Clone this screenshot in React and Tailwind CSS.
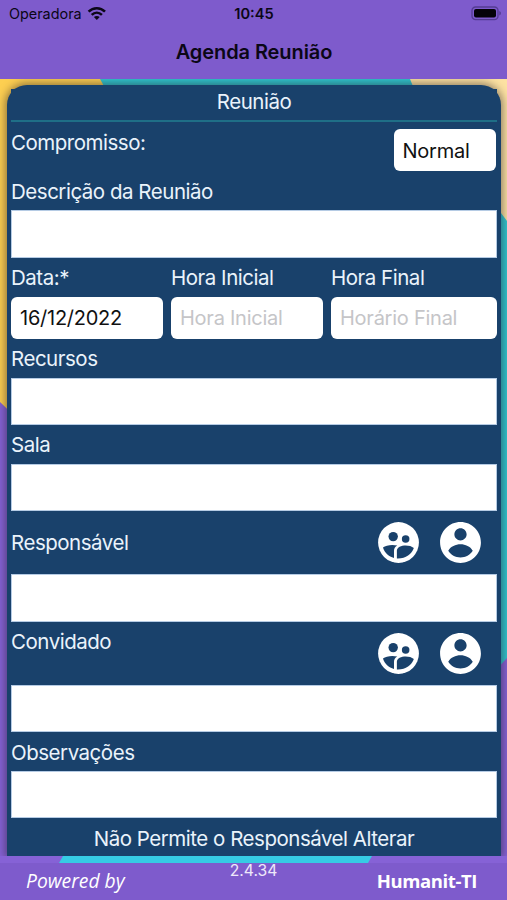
import React from "react";

const label = "text-[20.5px] leading-[24px] tracking-[-0.48px] text-[#eaf3fb] whitespace-nowrap";
const input = "flex items-center rounded-[6px] bg-white pl-[9px] pt-px text-[20px] tracking-[-0.25px]";

function WifiIcon() {
  return (
    <svg width="20" height="15" viewBox="0 0 20 15" fill="none" stroke="#0b0716" strokeWidth="2.5">
      <path d="M1.6 5.7C6.2 1 13.4 1 18 5.7" />
      <path d="M4.7 8.9C7.7 5.9 11.9 5.9 14.9 8.9" />
      <path d="M9.8 14L6.9 11.1C8.5 9.6 11.1 9.6 12.7 11.1Z" fill="#0b0716" stroke="none" />
    </svg>
  );
}

function BatteryIcon() {
  return (
    <svg width="31" height="15" viewBox="0 0 31 15">
      <rect x="1" y="1" width="26" height="12.6" rx="3.6" fill="none" stroke="#543c92" strokeWidth="1.3" />
      <rect x="3" y="3" width="22" height="8.6" rx="2" fill="#040208" />
      <path d="M28.3 5v4.6c1.2-.5 1.6-1.3 1.6-2.3s-.4-1.8-1.6-2.3z" fill="#543c92" />
    </svg>
  );
}

function PeopleCircle() {
  return (
    <svg width="49" height="49" viewBox="0 0 24 24">
      <circle cx="12" cy="12" r="10" fill="#fff" />
      <g fill="#19416b">
        <circle cx="9.4" cy="9.1" r="2.3" />
        <circle cx="15.5" cy="10.3" r="1.85" />
        <path d="M4.4 14.5C5.8 13.4 8.6 12.9 11.4 13.5C10.3 14.2 9.8 15 9.8 16V19.6C7.2 19 5.2 17.1 4.4 14.5Z" />
        <path d="M11.2 19.8V16.1C11.2 14.3 13.4 13.5 15.5 13.5C17.1 13.5 18.5 13.9 19.5 14.7C18.4 17.8 15.4 20 11.2 19.8Z" />
      </g>
    </svg>
  );
}

function PersonCircle() {
  return (
    <svg width="49" height="49" viewBox="0 0 24 24" fill="#fff">
      <path d="M12 2C6.48 2 2 6.48 2 12s4.48 10 10 10 10-4.48 10-10S17.52 2 12 2zm0 3c1.66 0 3 1.34 3 3s-1.34 3-3 3-3-1.34-3-3 1.34-3 3-3zM12 19.3c-2.5 0-4.71-1.28-6-3.3 1.2-2 3.6-3.1 6-3.1s4.8 1.1 6 3.1c-1.29 2.02-3.5 3.3-6 3.3z" />
    </svg>
  );
}

function PeopleButtons() {
  return (
    <div className="mr-3 flex gap-[13.5px]">
      <PeopleCircle />
      <PersonCircle />
    </div>
  );
}

function Field() {
  return <div className="h-[47.5px] shrink-0 border border-[#b5cbe4] bg-white" />;
}

function Backdrop() {
  return (
    <svg className="absolute inset-0" width="507" height="900" viewBox="0 0 507 900">
      <rect width="507" height="900" fill="#2fc6d0" />
      <path d="M0 79H100L110 97V500H0Z" fill="#fdcf51" />
      <path d="M410 79H507V221L422 108Z" fill="#fde2a2" />
      <path d="M0 402L60 460V856H63L59 863V900H0Z" fill="#8662d6" />
      <path d="M507 658L440 730V800L372 856L368 863V900H507Z" fill="#8662d6" />
    </svg>
  );
}

export default function App() {
  return (
    <div className="relative h-[900px] w-[507px] overflow-hidden font-['Inter','Liberation_Sans',sans-serif]">
      <Backdrop />
      <div className="relative flex h-full flex-col">
        <header className="relative z-10 h-[79px] shrink-0 bg-[#7e5bcc] text-[#0b0716]">
          <div className="grid h-[27px] grid-cols-3 items-center pl-[9px] pr-[5px]">
            <div className="flex items-center gap-[5px] text-[14.4px]">
              <span className="pt-px">Operadora</span>
              <WifiIcon />
            </div>
            <span className="-ml-[3px] pt-[2px] text-center text-[14.6px] font-semibold">10:45</span>
            <div className="flex justify-end"><BatteryIcon /></div>
          </div>
          <h1 className="mt-[12px] pl-px text-center text-[20px] font-semibold leading-[26px] tracking-[-0.08px]">Agenda Reunião</h1>
        </header>

        <div className="h-[784px] shrink-0 overflow-hidden pt-[6px]">
          <main className="ml-[7px] h-[771px] w-[494px] rounded-t-[20px] bg-[#19416b] px-1 pt-1 shadow-[0_0_9px_2px_rgba(40,30,40,0.5)]">
            <div className="flex h-[767px] flex-col bg-[#19416b]">
              <div className={`h-[33px] shrink-0 border-b-2 border-[#1f6f87] pt-px text-center ${label}`}>Reunião</div>
              <div className="flex h-[57px] shrink-0 justify-between pr-px pt-[7px]">
                <span className={`pt-[2px] ${label}`}>Compromisso:</span>
                <div className={`h-[42px] w-[102.5px] text-[#111] ${input}`}>Normal</div>
              </div>
              <div className={`h-[31px] shrink-0 pt-px ${label}`}>Descrição da Reunião</div>
              <Field />
              <div className="grid h-[120px] shrink-0 grid-cols-[152px_152px_166px] grid-rows-[39px_42px] gap-x-2">
                <span className={`pt-2 ${label}`}>Data:*</span>
                <span className={`pt-2 ${label}`}>Hora Inicial</span>
                <span className={`pt-2 ${label}`}>Hora Final</span>
                <div className={`text-[#111] ${input}`}>16/12/2022</div>
                <div className={`text-[#c5c5c8] ${input}`}>Hora Inicial</div>
                <div className={`text-[#c5c5c8] ${input}`}>Horário Final</div>
                <span className={`pt-2 ${label}`}>Recursos</span>
              </div>
              <Field />
              <div className={`h-[38.5px] shrink-0 pt-2 ${label}`}>Sala</div>
              <Field />
              <div className="flex h-[63px] shrink-0 items-center justify-between">
                <span className={label}>Responsável</span>
                <PeopleButtons />
              </div>
              <Field />
              <div className="flex h-[63px] shrink-0 justify-between pt-[7px]">
                <span className={`pt-px ${label}`}>Convidado</span>
                <PeopleButtons />
              </div>
              <Field />
              <div className={`h-[38.5px] shrink-0 pt-[9px] ${label}`}>Observações</div>
              <Field />
              <div className={`pt-[9px] text-center ${label}`}>Não Permite o Responsável Alterar</div>
            </div>
          </main>
          <div className="relative h-[7px]">
            <svg width="507" height="7" viewBox="0 0 507 7">
              <rect width="507" height="7" fill="#8662d6" />
              <path d="M63 0H372L368 7H59Z" fill="#36cbe4" />
            </svg>
          </div>
        </div>

        <footer className="grid h-[37px] shrink-0 grid-cols-3 bg-[#7e5bcc] text-white">
          <span className="whitespace-nowrap pl-[26px] pt-[4px] font-['Open_Sans',sans-serif] text-[19.3px] font-medium italic leading-[27px]">Powered by</span>
          <span className="text-center text-[15.7px] leading-[15px] text-[#eee8fa]">2.4.34</span>
          <span className="whitespace-nowrap pr-[30px] pt-[4px] text-right font-['Open_Sans',sans-serif] text-[18.5px] font-bold leading-[27px] tracking-[-0.4px]">Humanit-TI</span>
        </footer>
      </div>
    </div>
  );
}
